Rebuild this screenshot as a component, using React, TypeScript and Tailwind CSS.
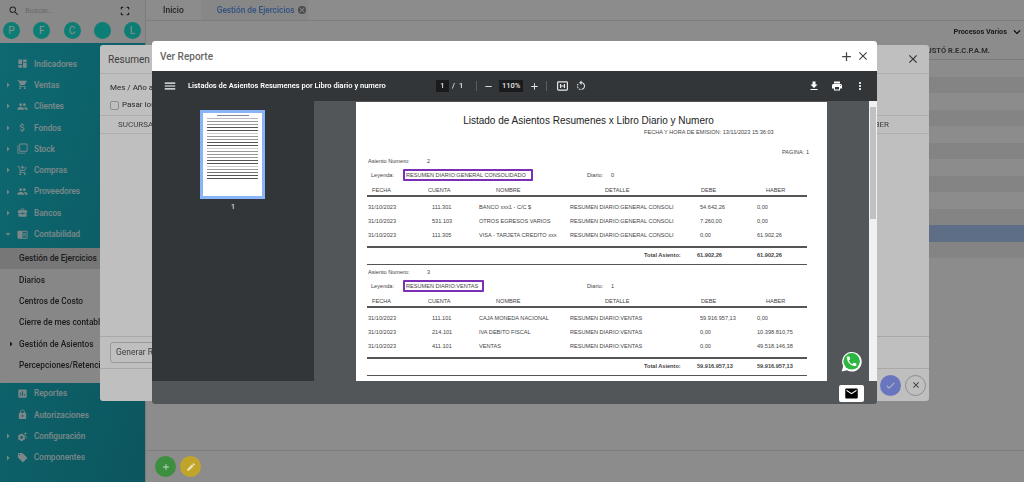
import React from 'react';
import { Scan } from 'lucide-react';
import {
  MdDashboard, MdShoppingCart, MdPeople, MdAttachMoney, MdFilterNone, MdAddShoppingCart, MdBusinessCenter,
  MdChromeReaderMode, MdAssessment, MdLock, MdSettingsSuggest, MdLocalOffer, MdSearch, MdArrowRight, MdArrowDropDown,
  MdMenu, MdAdd, MdRemove, MdClose, MdFileDownload, MdPrint, MdMoreVert, MdCheck, MdEdit, MdEmail, MdKeyboardArrowDown,
  MdOutlineRotateLeft,
} from 'react-icons/md';

type Item = { label: string; icon: React.ElementType; arrow?: boolean; open?: boolean };

const MENU_TOP: Item[] = [
  { label: 'Indicadores', icon: MdDashboard },
  { label: 'Ventas', icon: MdShoppingCart, arrow: true },
  { label: 'Clientes', icon: MdPeople, arrow: true },
  { label: 'Fondos', icon: MdAttachMoney, arrow: true },
  { label: 'Stock', icon: MdFilterNone, arrow: true },
  { label: 'Compras', icon: MdAddShoppingCart, arrow: true },
  { label: 'Proveedores', icon: MdPeople, arrow: true },
  { label: 'Bancos', icon: MdBusinessCenter, arrow: true },
  { label: 'Contabilidad', icon: MdChromeReaderMode, open: true },
];

const MENU_BOTTOM: Item[] = [
  { label: 'Reportes', icon: MdAssessment },
  { label: 'Autorizaciones', icon: MdLock },
  { label: 'Configuración', icon: MdSettingsSuggest, arrow: true },
  { label: 'Componentes', icon: MdLocalOffer, arrow: true },
];

const SUB_MENU = ['Gestión de Ejercicios', 'Diarios', 'Centros de Costo', 'Cierre de mes contable', 'Gestión de Asientos', 'Percepciones/Retenciones'];

const SHORTCUTS = ['P', 'F', 'C', '', 'L'];

const MenuRow: React.FC<{ item: Item }> = ({ item }) => {
  const Icon = item.icon;
  return (
    <div className="h-[21.33px] flex items-center text-white/85 text-[8.2px] font-medium">
      <div className="w-[11px] flex justify-end">
        {item.arrow && <MdArrowRight className="text-[12px] -mr-[3px]" />}
        {item.open && <MdArrowDropDown className="text-[12px] -mr-[3px]" />}
      </div>
      <div className="w-[23px] flex justify-center">
        <Icon className="text-[11px]" />
      </div>
      <span>{item.label}</span>
    </div>
  );
};

const Sidebar = () => (
  <div className="w-[146px] shrink-0 h-full flex flex-col border-r border-[#ddd]">
    <div className="h-[43px] bg-[#f5f5f5] pl-[3px] pr-[4px]">
      <div className="h-[22px] flex items-center pl-[5px] pr-[11px]">
        <MdSearch className="text-[#444] text-[12px]" />
        <span className="ml-[5px] text-[7.5px] text-[#bbb]">Buscar...</span>
        <Scan className="ml-auto w-[10px] h-[10px] text-[#222]" strokeWidth={2.5} />
      </div>
      <div className="flex justify-between">
        {SHORTCUTS.map((s, i) => (
          <div key={i} className="w-[17px] h-[17px] rounded-full bg-[#17e0d0] text-white text-[10px] flex items-center justify-center">{s}</div>
        ))}
      </div>
    </div>
    <div className="flex-1 bg-gradient-to-br from-[#1abccb] to-[#169aa8] pt-[10px]">
      {MENU_TOP.map(item => <MenuRow key={item.label} item={item} />)}
      <div className="mt-[3px] pb-[7px] bg-[#f0f0f0]">
        {SUB_MENU.map((label, i) => (
          <div key={label} className={`h-[21.33px] flex items-center pl-[19px] text-[8.3px] font-medium text-[#333] relative whitespace-nowrap overflow-hidden ${i === 0 ? 'bg-[#d4d4d4]' : ''}`}>
            {i === 4 && <MdArrowRight className="absolute left-[5px] text-[12px]" />}
            {label}
          </div>
        ))}
      </div>
      {MENU_BOTTOM.map(item => <MenuRow key={item.label} item={item} />)}
    </div>
  </div>
);

const MainArea = () => (
  <div className="flex-1 h-full flex flex-col bg-[#fafafa]">
    <div className="h-[21px] flex items-center border-b border-[#e0e0e0] text-[8.5px] font-medium">
      <span className="ml-[17px] text-[#444]">Inicio</span>
      <div className="ml-[17px] h-full w-[107px] bg-[#f0f0f0] flex items-center pl-[16px] text-[8.3px] text-[#5b93e8] whitespace-nowrap">
        Gestión de Ejercicios
        <MdClose className="ml-[3px] w-[8px] h-[8px] bg-[#888] rounded-full text-white" />
      </div>
    </div>
    <div className="h-[22px] flex items-center justify-end text-[7.3px] font-bold text-[#333]">
      Procesos Varios
      <MdKeyboardArrowDown className="ml-[3px] text-[14px] text-black" />
    </div>
    <div className="h-[17px] flex items-center justify-end pr-[34px] text-[7.5px] font-bold text-[#555] border-b border-[#ddd]">AJUSTÓ R.E.C.P.A.M.</div>
    <div className="flex-1">
      {Array.from({ length: 12 }).map((_, i) => (
        <div key={i} className={`h-[16.5px] ${i === 10 ? 'bg-[#aac4f0]' : i % 2 === 0 ? 'bg-[#fafafa]' : 'bg-[#ededed]'}`} />
      ))}
    </div>
    <div className="h-[32px] border-t border-[#e0e0e0] flex items-center pl-[9px] gap-[4px]">
      <div className="relative z-10 w-[21px] h-[21px] rounded-full bg-[#3c8f3e] flex items-center justify-center"><MdAdd className="text-white/70 text-[10px]" /></div>
      <div className="relative z-10 w-[21px] h-[21px] rounded-full bg-[#c0a52a] flex items-center justify-center"><MdEdit className="text-white/70 text-[10px]" /></div>
    </div>
  </div>
);

const ResumenModal = () => (
  <div className="absolute left-[100px] top-[45px] w-[829px] h-[356px] bg-white rounded-[3px] flex flex-col text-[#333]">
    <div className="h-[29px] flex items-center justify-between pl-[8px] pr-[9px] border-b border-[#e8e8e8]">
      <span className="text-[10px] text-[#555]">Resumen de Asientos</span>
      <MdClose className="text-[#444] text-[14px]" />
    </div>
    <div className="h-[42px] pl-[10px] border-b border-[#e8e8e8]">
      <div className="text-[8px] mt-[8px]">Mes / Año a Resumir</div>
      <div className="flex items-center mt-[5px] text-[8px]">
        <div className="w-[9px] h-[9px] rounded-[2px] border border-[#bbb] mr-[3px]" />
        Pasar los
      </div>
    </div>
    <div className="h-[18px] flex items-center justify-between pl-[18px] pr-[40px] text-[8px] border-b border-[#e8e8e8] text-[#555]">
      <span>SUCURSAL</span>
      <span>HABER</span>
    </div>
    <div className="flex-1 border-b border-[#e0e0e0]" />
    <div className="h-[32px] pl-[10px] flex items-center border-b border-[#e0e0e0]">
      <div className="h-[21px] w-[80px] border border-[#ccc] rounded-[3px] text-[8.5px] flex items-center pl-[5px] text-[#555]">Generar Resumen</div>
    </div>
    <div className="h-[32px] flex items-center justify-end pr-[3px] gap-[4px]">
      <div className="w-[21px] h-[21px] rounded-full bg-[#8c9eff] flex items-center justify-center"><MdCheck className="text-white text-[11px]" /></div>
      <div className="w-[21px] h-[21px] rounded-full border border-[#bbb] flex items-center justify-center"><MdClose className="text-[#444] text-[10px]" /></div>
    </div>
  </div>
);

type Row = { fecha: string; cuenta: string; nombre: string; detalle: string; debe: string; haber: string };

const COLS = 'grid grid-cols-[64px_47px_91px_130px_57px_1fr] pl-[12px]';

const Rule = ({ className }: { className: string }) => <div className={`ml-[11px] mr-[20px] h-[1.5px] bg-[#555] ${className}`} />;

const Asiento: React.FC<{ numero: string; leyenda: string; boxWidth: string; diario: string; rows: Row[]; debe: string; haber: string }> = ({ numero, leyenda, boxWidth, diario, rows, debe, haber }) => (
  <div className="text-[5.6px] text-[#444] leading-[8px]">
    <div className="h-[8px] flex pl-[12px]">
      <span className="w-[59px]">Asiento Numero:</span>
      <span>{numero}</span>
    </div>
    <div className="h-[12px] mt-[4px] flex items-center pl-[15px] relative">
      <span className="w-[32px]">Leyenda:</span>
      <div className={`h-[12px] ${boxWidth} border-2 border-[#7b2fb5] rounded-[1px] flex items-center pl-[1px] whitespace-nowrap`}>{leyenda}</div>
      <span className="absolute left-[231px]">Diario:</span>
      <span className="absolute left-[255px]">{diario}</span>
    </div>
    <div className={`${COLS} mt-[5px] h-[8px]`}>
      <span className="pl-[4px]">FECHA</span>
      <span className="-ml-[4px]">CUENTA</span>
      <span className="pl-[17px]">NOMBRE</span>
      <span className="pl-[35px]">DETALLE</span>
      <span className="pl-px">DEBE</span>
      <span className="pl-[9px]">HABER</span>
    </div>
    <Rule className="mt-[1px] mb-[3px]" />
    {rows.map(r => (
      <div key={r.cuenta} className={`${COLS} h-[14px] items-center whitespace-nowrap`}>
        <span>{r.fecha}</span>
        <span>{r.cuenta}</span>
        <span>{r.nombre}</span>
        <span>{r.detalle}</span>
        <span>{r.debe}</span>
        <span>{r.haber}</span>
      </div>
    ))}
    <Rule className="mt-[4.5px]" />
    <div className={`${COLS} h-[9px] mt-[3px] font-bold items-center`}>
      <span /><span /><span />
      <span className="pl-[74px] whitespace-nowrap">Total Asiento:</span>
      <span className="-ml-[3px]">{debe}</span>
      <span>{haber}</span>
    </div>
    <Rule className="mt-[4px] mb-[3px]" />
  </div>
);

const FIRST: Row[] = [
  { fecha: '31/10/2023', cuenta: '111.301', nombre: 'BANCO xxx1 - C/C $', detalle: 'RESUMEN DIARIO:GENERAL CONSOLI', debe: '54.642,26', haber: '0,00' },
  { fecha: '31/10/2023', cuenta: '531.103', nombre: 'OTROS EGRESOS VARIOS', detalle: 'RESUMEN DIARIO:GENERAL CONSOLI', debe: '7.260,00', haber: '0,00' },
  { fecha: '31/10/2023', cuenta: '111.305', nombre: 'VISA - TARJETA CREDITO xxx', detalle: 'RESUMEN DIARIO:GENERAL CONSOLI', debe: '0,00', haber: '61.902,26' },
];

const SECOND: Row[] = [
  { fecha: '31/10/2023', cuenta: '111.101', nombre: 'CAJA MONEDA NACIONAL', detalle: 'RESUMEN DIARIO:VENTAS', debe: '59.916.957,13', haber: '0,00' },
  { fecha: '31/10/2023', cuenta: '214.101', nombre: 'IVA DEBITO FISCAL', detalle: 'RESUMEN DIARIO:VENTAS', debe: '0,00', haber: '10.398.810,75' },
  { fecha: '31/10/2023', cuenta: '411.101', nombre: 'VENTAS', detalle: 'RESUMEN DIARIO:VENTAS', debe: '0,00', haber: '49.518.146,38' },
];

const PdfPage = () => (
  <div className="relative w-[471px] h-[279px] bg-white overflow-hidden font-['Liberation_Sans',sans-serif]">
    <div className="pt-[12px] h-[26px] text-center text-[10px] leading-[14px] text-[#222] pr-[6px] whitespace-nowrap">Listado de Asientos Resumenes x Libro Diario y Numero</div>
    <div className="pl-[288px] text-[5.6px] leading-[8px] text-[#444] whitespace-nowrap">FECHA Y HORA DE EMISION: 13/11/2023 15:36:03</div>
    <div className="mt-[12px] pr-[18px] text-right text-[5.6px] leading-[8px] text-[#444] mb-[1px]">PAGINA: 1</div>
    <Asiento numero="2" leyenda="RESUMEN DIARIO:GENERAL CONSOLIDADO" boxWidth="w-[130px]" diario="0" rows={FIRST} debe="61.902,26" haber="61.902,26" />
    <Asiento numero="3" leyenda="RESUMEN DIARIO:VENTAS" boxWidth="w-[81px]" diario="1" rows={SECOND} debe="59.916.957,13" haber="59.916.957,13" />
    <div className="pl-[12px] text-[5.6px] leading-[8px] text-[#444]">Asiento Numero:</div>
  </div>
);

const THUMB_LINES = ['#bbb', '#999', '#999', '#555', '#555', '#ccc', '#999', '#999', '#555', '#555', '#ccc', '#999', '#999', '#999', '#555', '#555', '#ccc', '#999', '#777', '#555', '#555'];

const Thumbnail = () => (
  <div className="w-[65px] h-[89px] -ml-px border-[3px] border-[#8ab4f8] bg-white px-[4px] pt-[2px]">
    <div className="mx-auto w-[32px] h-px bg-[#888]" />
    {THUMB_LINES.map((color, i) => (
      <div key={i} className="h-px mt-[2px]" style={{ backgroundColor: color }} />
    ))}
  </div>
);

const Divider = () => <div className="w-px h-[10px] bg-[#5a5e61]" />;

const FitIcon = () => (
  <svg viewBox="0 0 14 12" className="ml-[10px] w-[11px] h-[10px]" fill="none" stroke="currentColor">
    <rect x="0.75" y="0.75" width="12.5" height="10.5" rx="1" strokeWidth="1.5" />
    <path d="M4.5 3.5v5M9.5 3.5v5M4.5 6h5" strokeWidth="1.5" />
  </svg>
);

const WhatsappBadge = () => (
  <svg viewBox="0 0 24 24" className="absolute left-[689px] top-[310px] w-[21px] h-[21px]">
    <path fill="#fff" d="M0.8 23.4l1.7-6A11.2 11.2 0 1 1 6.9 22z" />
    <circle cx="12.2" cy="11.8" r="9.4" fill="#2bb741" />
    <path fill="#fff" transform="translate(4.9 4.6) scale(0.6)" d="M6.62 10.79c1.44 2.83 3.76 5.14 6.59 6.59l2.2-2.2c.27-.27.67-.36 1.02-.24 1.12.37 2.33.57 3.57.57.55 0 1 .45 1 1V20c0 .55-.45 1-1 1-9.39 0-17-7.61-17-17 0-.55.45-1 1-1h3.5c.55 0 1 .45 1 1 0 1.25.2 2.45.57 3.57.11.35.03.74-.25 1.02l-2.2 2.2z" />
  </svg>
);

const PdfToolbar = () => (
  <div className="h-[30px] bg-[#323639] flex items-center text-white relative">
    <MdMenu className="ml-[11px] text-[14px]" />
    <span className="ml-[11px] text-[7.5px] font-semibold whitespace-nowrap w-[248px]">Listados de Asientos Resumenes por Libro diario y numero</span>
    <div className="flex items-center text-[7.5px] text-[#e8e8e8] font-medium">
      <div className="w-[13px] h-[12px] bg-[#191b1c] flex items-center justify-center">1</div>
      <span className="ml-[3px]">/</span>
      <span className="ml-[4px]">1</span>
      <div className="ml-[13px]"><Divider /></div>
      <MdRemove className="ml-[6px] text-[11px]" />
      <div className="ml-[5px] w-[24px] h-[12px] bg-[#191b1c] flex items-center justify-center">110%</div>
      <MdAdd className="ml-[6px] text-[11px]" />
      <div className="ml-[6px]"><Divider /></div>
      <FitIcon />
      <MdOutlineRotateLeft className="ml-[7px] text-[12px]" />
    </div>
    <div className="ml-auto flex items-center pr-[11px] gap-[11px]">
      <MdFileDownload className="text-[12px]" />
      <MdPrint className="text-[12px]" />
      <MdMoreVert className="text-[12px]" />
    </div>
  </div>
);

const ReporteModal = () => (
  <div className="absolute left-[152px] top-[41px] w-[725px] h-[363px] bg-[#525659] rounded-[3px] overflow-hidden flex flex-col">
    <div className="h-[30px] bg-white flex items-center pl-[8px] pr-[7px]">
      <span className="text-[10px] text-[#666] font-medium">Ver Reporte</span>
      <MdAdd className="ml-auto text-[15px] text-[#444]" />
      <MdClose className="ml-[2px] text-[14px] text-[#444]" />
    </div>
    <PdfToolbar />
    <div className="h-[280px] flex">
      <div className="w-[162px] bg-[#323639] flex flex-col items-center pt-[9px]">
        <Thumbnail />
        <span className="mt-[3px] text-[7px] text-[#ddd] font-medium">1</span>
      </div>
      <div className="flex-1 pl-[42px] pt-px"><PdfPage /></div>
      <div className="w-[8px] bg-[#f1f1f1] flex flex-col items-center py-[3px]">
        <div className="w-[6px] h-[112px] bg-[#c1c1c1] mt-[3px]" />
      </div>
    </div>
    <WhatsappBadge />
    <div className="absolute left-[687px] top-[344px] w-[25px] h-[17px] bg-white rounded-[2px] flex items-center justify-center">
      <MdEmail className="text-[15px] text-black" />
    </div>
  </div>
);

const App = () => (
  <div className="relative w-[1024px] h-[482px] overflow-hidden blur-[0.5px] font-['Roboto',sans-serif]">
    <div className="flex h-full">
      <Sidebar />
      <MainArea />
    </div>
    <div className="absolute inset-0 bg-black/25" />
    <ResumenModal />
    <div className="absolute inset-0 bg-black/25" />
    <ReporteModal />
  </div>
);

export default App;
